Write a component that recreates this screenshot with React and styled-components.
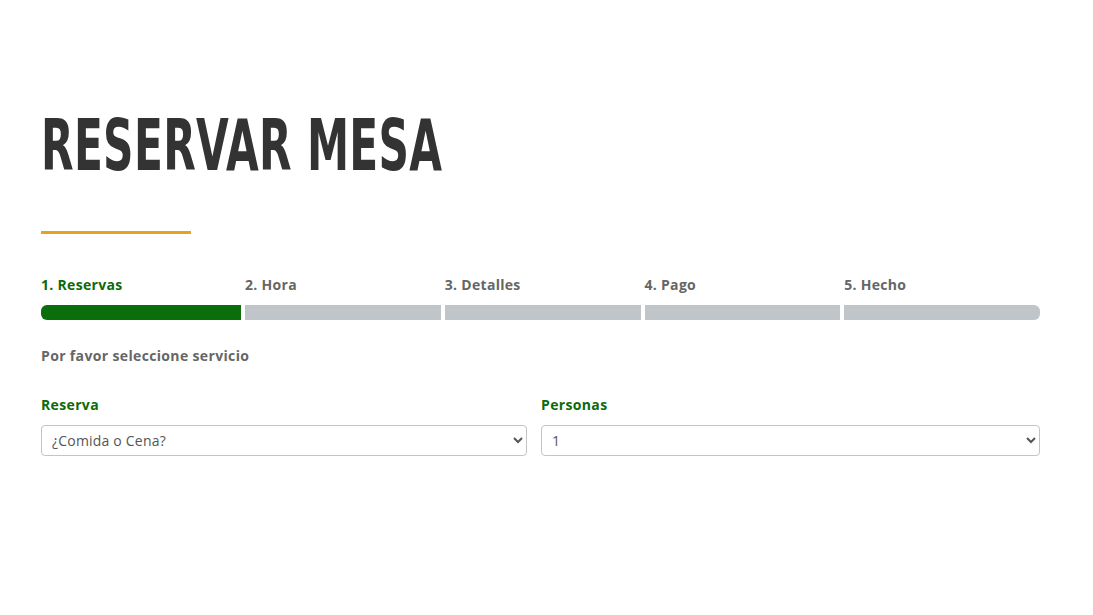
import styled, { createGlobalStyle } from "styled-components";

const GlobalStyle = createGlobalStyle`
  body {
    margin: 0;
    background: #fff;
    font-family: "Open Sans", "Noto Sans", sans-serif;
  }
`;

const Page = styled.div`
  width: 999px;
  padding: 105px 0 0 41px;
`;

const Title = styled.h1`
  margin: 0;
  font-family: "DejaVu Sans", sans-serif;
  font-stretch: condensed;
  font-weight: 700;
  font-size: 71px;
  line-height: 82px;
  color: #333;
  letter-spacing: 0.5px;
  transform: scaleX(0.662);
  transform-origin: left center;
  white-space: nowrap;
`;

const Rule = styled.div`
  width: 150px;
  height: 3px;
  margin-top: 44px;
  background: #e5a21e;
`;

const Steps = styled.div`
  display: grid;
  grid-template-columns: 200px repeat(4, 1fr);
  column-gap: 4px;
  margin-top: 41px;
`;

const Step = styled.div`
  display: flex;
  flex-direction: column;
  gap: 10px;
`;

const StepLabel = styled.span`
  font-size: 14px;
  font-weight: 700;
  line-height: 20px;
  letter-spacing: 0.3px;
  color: ${(p) => (p.$active ? "#0b6b0b" : "#666")};
`;

const StepBar = styled.div`
  height: 15px;
  background: ${(p) => (p.$active ? "#0a6e0a" : "#c0c5c9")};
  border-radius: ${(p) =>
    p.$first ? "6px 0 0 6px" : p.$last ? "0 6px 6px 0" : "0"};
`;

const Hint = styled.p`
  margin: 26px 0 0;
  font-size: 14px;
  font-weight: 700;
  letter-spacing: 0.35px;
  color: #666;
`;

const Fields = styled.div`
  display: grid;
  grid-template-columns: 486px 1fr;
  column-gap: 14px;
  margin-top: 30px;
`;

const Field = styled.label`
  display: flex;
  flex-direction: column;
  gap: 10px;
`;

const FieldLabel = styled.span`
  font-size: 14px;
  font-weight: 700;
  line-height: 20px;
  letter-spacing: 0.35px;
  color: #0b6b0b;
`;

const Select = styled.select`
  height: 31px;
  padding: 0 6px;
  border: 1px solid #c4c4c4;
  border-radius: 4px;
  background: #fff;
  font-family: "Open Sans", "Noto Sans", sans-serif;
  font-size: 14px;
  letter-spacing: 0.2px;
  color: #555;
`;

const steps = ["1. Reservas", "2. Hora", "3. Detalles", "4. Pago", "5. Hecho"];

export default function App() {
  return (
    <Page>
      <GlobalStyle />
      <Title>RESERVAR MESA</Title>
      <Rule />
      <Steps>
        {steps.map((s, i) => (
          <Step key={s}>
            <StepLabel $active={i === 0}>{s}</StepLabel>
            <StepBar
              $active={i === 0}
              $first={i === 0}
              $last={i === steps.length - 1}
            />
          </Step>
        ))}
      </Steps>
      <Hint>Por favor seleccione servicio</Hint>
      <Fields>
        <Field>
          <FieldLabel>Reserva</FieldLabel>
          <Select defaultValue="">
            <option value="">¿Comida o Cena?</option>
            <option>Comida</option>
            <option>Cena</option>
          </Select>
        </Field>
        <Field>
          <FieldLabel>Personas</FieldLabel>
          <Select defaultValue="1">
            {[1, 2, 3, 4, 5, 6, 7, 8].map((n) => (
              <option key={n}>{n}</option>
            ))}
          </Select>
        </Field>
      </Fields>
    </Page>
  );
}
